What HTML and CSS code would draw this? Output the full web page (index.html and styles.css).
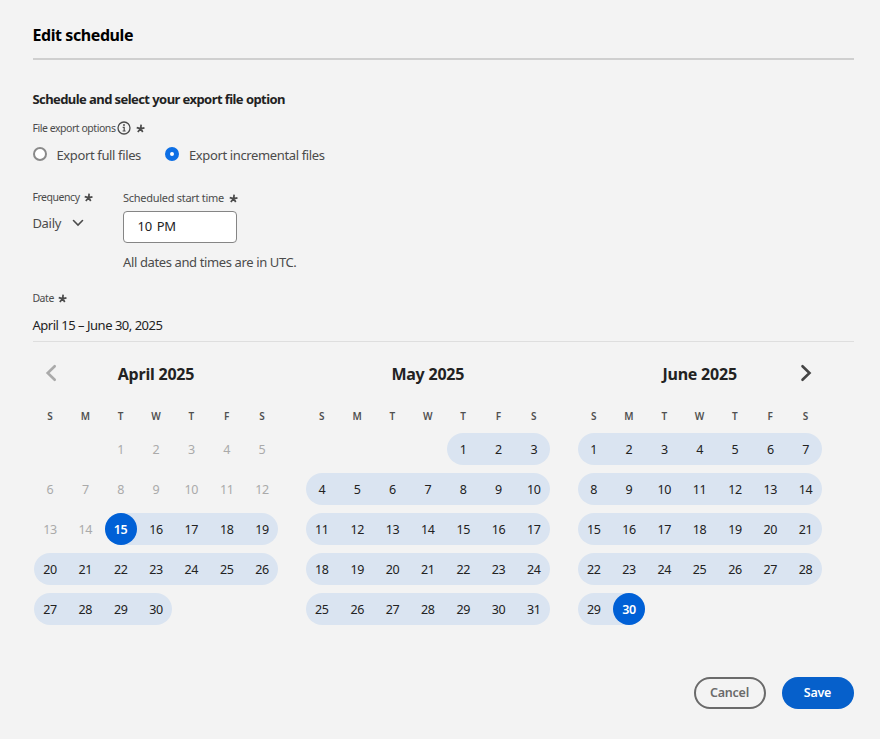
FILE: index.html
```html
<!DOCTYPE html>
<html lang="en">
<head>
<meta charset="utf-8">
<title>Edit schedule</title>
<link rel="stylesheet" href="styles.css">
</head>
<body>
<svg class="defs" width="0" height="0"><symbol id="star" viewBox="0 0 10 10"><path d="M5.2 5.2 5.7.8M5.2 5.2.8 4M5.2 5.2l4.2-.9M5.2 5.2 2 8.9M5.2 5.2l2.3 3.6" fill="none" stroke="currentColor" stroke-width="1.9"/></symbol></svg>
<main class="dialog">
  <h1 class="title">Edit schedule</h1>
  <h2 class="subtitle">Schedule and select your export file option</h2>
  <div class="label export-label"><span>File export options</span>
    <svg class="info" viewBox="0 0 14 14"><circle cx="7" cy="7" r="6" fill="none" stroke="currentColor" stroke-width="1.3"/><circle cx="7" cy="4" r=".95" fill="currentColor"/><path d="M5.7 6.3h1.5v3.6M5.6 10h3" fill="none" stroke="currentColor" stroke-width="1.2"/></svg>
    <svg class="star"><use href="#star"/></svg></div>
  <div class="radios">
    <label class="radio"><i class="dot"></i><span>Export full files</span></label>
    <label class="radio"><i class="dot on"></i><span>Export incremental files</span></label>
  </div>
  <div class="fields">
    <div class="frequency">
      <div class="label"><span>Frequency</span><svg class="star"><use href="#star"/></svg></div>
      <div class="picker"><span>Daily</span><svg class="chevron" viewBox="0 0 12 8"><path d="M1.5 1.5 6 6l4.5-4.5" fill="none" stroke="currentColor" stroke-width="1.6" stroke-linecap="round"/></svg></div>
    </div>
    <div class="start">
      <div class="label"><span>Scheduled start time</span><svg class="star"><use href="#star"/></svg></div>
      <div class="time"><span>10</span><span>PM</span></div>
      <p class="hint">All dates and times are in UTC.</p>
    </div>
  </div>
  <div class="label date-label"><span>Date</span><svg class="star"><use href="#star"/></svg></div>
  <div class="range">April 15 – June 30, 2025</div>
  <div class="calendar" id="calendar"></div>
  <div class="actions"><button class="btn cancel">Cancel</button><button class="btn save">Save</button></div>
</main>
<script src="calendar.js"></script>
</body>
</html>
```
FILE: calendar.js
```js
const months = [
  { name: "April 2025", offset: 2, days: 30, from: 15, to: 30, pick: 15 },
  { name: "May 2025", offset: 4, days: 31, from: 1, to: 31 },
  { name: "June 2025", offset: 0, days: 30, from: 1, to: 30, pick: 30 }
];
const arrow = (cls, d) => `<svg class="arrow ${cls}" viewBox="0 0 12 18"><path d="${d}" fill="none" stroke="currentColor" stroke-width="2.6" stroke-linecap="round"/></svg>`;
document.getElementById("calendar").innerHTML = months.map((m, i) => {
  let cells = "SMTWTFS".split("").map(d => `<span class="weekday">${d}</span>`).join("");
  cells += `<span class="day"></span>`.repeat(m.offset);
  for (let d = 1; d <= m.days; d++) {
    const col = (m.offset + d - 1) % 7;
    const c = ["day"];
    if (d < m.from) c.push("past"); else c.push("in");
    if (d === m.from || (d > m.from && col === 0)) c.push("first");
    if (d === m.to || (d >= m.from && col === 6)) c.push("last");
    if (d === m.pick) c.push("picked");
    cells += `<span class="${c.join(" ")}"><b>${d}</b></span>`;
  }
  const prev = i === 0 ? arrow("prev", "M9.7 2.2 2.7 9l7 6.8") : "";
  const next = i === 2 ? arrow("next", "M2.5 2.2 9.5 9l-7 6.8") : "";
  return `<section class="month"><header class="month-head"><span class="side">${prev}</span><h3>${m.name}</h3><span class="side end">${next}</span></header><div class="grid">${cells}</div></section>`;
}).join("");
```
FILE: styles.css
```css
* { box-sizing: border-box; }
body { margin: 0; background: #f3f3f3; color: #4b4b4b; font: 13px/20px "Noto Sans", sans-serif; white-space: nowrap; }
h1, h2, h3, p { margin: 0; }
.defs { display: block; }
.dialog { width: 880px; height: 739px; padding: 23px 26px 0 33px; display: flex; flex-direction: column; }
.title { height: 37px; border-bottom: 2px solid #cfcfcf; font-size: 16px; line-height: 24px; color: #000; letter-spacing: -.42px; text-indent: -.5px; }
.subtitle { margin: 29px 0 0 -.6px; font-size: 13px; line-height: 20px; color: #222; letter-spacing: -.57px; }
.label { display: flex; align-items: center; height: 16px; margin-left: -.6px; font-size: 10.5px; line-height: 16px; letter-spacing: -.45px; }
.star { width: 9px; height: 9px; margin: 1px 0 0 4px; }
.export-label { margin-top: 11px; }
.info { width: 14px; height: 14px; margin-left: 1px; }
.export-label .star { margin-left: 5px; }
.radios { display: flex; height: 20px; margin-top: 9px; gap: 24.5px; }
.radio { display: flex; align-items: center; letter-spacing: -.37px; }
.dot { width: 14px; height: 14px; margin: -3px 9.5px 0 0; border: 2px solid #8a8a8a; border-radius: 50%; background: #fff; }
.dot.on { border: 5px solid #0d6fe5; }
.fields { display: flex; margin-top: 24px; height: 83px; }
.frequency { width: 90px; }
.picker { display: flex; align-items: center; margin: 8px 0 0 -.6px; gap: 11px; letter-spacing: -.3px; }
.chevron { width: 12px; height: 8px; }
.start .label { margin: 1px 0 0; font-size: 11px; letter-spacing: -.28px; }
.start .star { margin-left: 5px; }
.time { display: flex; align-items: center; gap: 5px; width: 114px; height: 32px; margin-top: 5px; padding: 0 0 2px 13.5px; border: 1px solid #858585; border-radius: 4px; background: #fff; color: #222; letter-spacing: -.3px; }
.hint { margin-top: 9px; letter-spacing: -.38px; }
.date-label { margin-top: 18px; }
.range { height: 28px; margin-top: 8px; padding-top: 1px; border-bottom: 1px solid #dedede; color: #222; letter-spacing: -.49px; text-indent: -.5px; }
.calendar { display: flex; gap: 24.5px; width: 791px; height: 316px; margin: 0 0 0 -.7px; }
.month { width: 247.33px; }
.month-head { display: grid; grid-template-columns: 30px 1fr 30px; align-items: center; height: 24px; margin-top: 20px; text-align: center; }
.month-head h3 { font-size: 16px; line-height: 24px; color: #222; letter-spacing: -.22px; }
.side { display: flex; padding-left: 13px; }
.side.end { padding-left: 7px; }
.arrow { width: 12px; height: 18px; margin-top: -2px; color: #aaa; }
.next { color: #444; }
.grid { display: grid; grid-template-columns: repeat(7, 1fr); grid-template-rows: 36px; grid-auto-rows: 40px; margin-top: 7px; }
.weekday { font-size: 10px; font-weight: 600; line-height: 46px; text-align: center; color: #505050; }
.day { position: relative; display: flex; align-items: center; justify-content: center; height: 40px; color: #222; font-size: 12.5px; letter-spacing: -.4px; }
.day b { position: relative; padding-top: 1px; font-weight: 400; }
.past { color: #aaa; }
.in::before { content: ""; position: absolute; inset: 4px 0; background: #dae4f1; }
.first::before { left: 1.67px; border-radius: 16px 0 0 16px; }
.last::before { right: 1.67px; border-radius: 0 16px 16px 0; }
.picked b { width: 32px; height: 32px; border-radius: 50%; background: #0060d6; color: #fff; font-weight: 600; line-height: 32px; text-align: center; }
.actions { display: flex; justify-content: flex-end; gap: 16px; margin-top: 19px; }
.btn { width: 72px; height: 32px; padding: 0 1px 0 0; border: 0; border-radius: 16px; font: 600 12.5px/28px "Noto Sans", sans-serif; letter-spacing: -.25px; }
.cancel { border: 2px solid #6a6a6a; background: transparent; color: #6a6a6a; }
.save { background: #0660cb; color: #fff; }
```
